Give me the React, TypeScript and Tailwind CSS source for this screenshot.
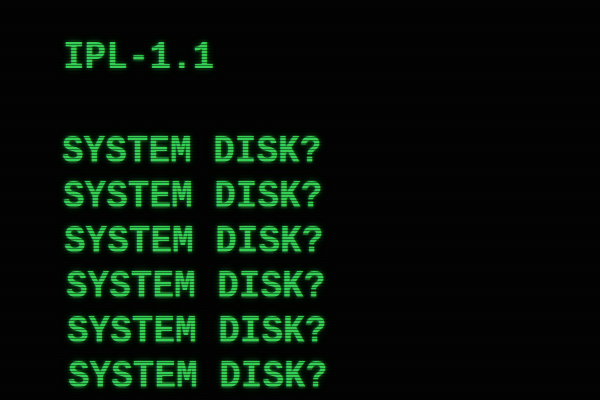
import React from "react";

const lines = [
  { text: "SYSTEM DISK?", pl: "pl-[62px]" },
  { text: "SYSTEM DISK?", pl: "pl-[63px]" },
  { text: "SYSTEM DISK?", pl: "pl-[64px]" },
  { text: "SYSTEM DISK?", pl: "pl-[66px]" },
  { text: "SYSTEM DISK?", pl: "pl-[67px]" },
  { text: "SYSTEM DISK?", pl: "pl-[68px]" },
];

const glyph =
  "inline-block origin-top scale-y-[1.1] text-[36px] font-bold leading-none text-[#36cf55] [font-family:'Liberation_Mono','DejaVu_Sans_Mono',monospace] [text-shadow:0_0_3px_rgba(70,255,100,0.5),0_0_8px_rgba(40,200,70,0.3)] whitespace-pre";

export default function App() {
  return (
    <div className="relative w-[600px] h-[400px] overflow-hidden bg-[#020302]">
      <div className="flex flex-col pt-[38px]">
        <div className="pl-[63px] h-[94px]">
          <span className={glyph}>IPL-1.1</span>
        </div>
        {lines.map((l, i) => (
          <div key={i} className={`${l.pl} h-[45px]`}>
            <span className={glyph}>{l.text}</span>
          </div>
        ))}
      </div>
      <div className="pointer-events-none absolute inset-0 bg-[repeating-linear-gradient(to_bottom,rgba(0,0,0,0)_0px,rgba(0,0,0,0)_2px,rgba(0,0,0,0.45)_2px,rgba(0,0,0,0.45)_3px)]" />
    </div>
  );
}
